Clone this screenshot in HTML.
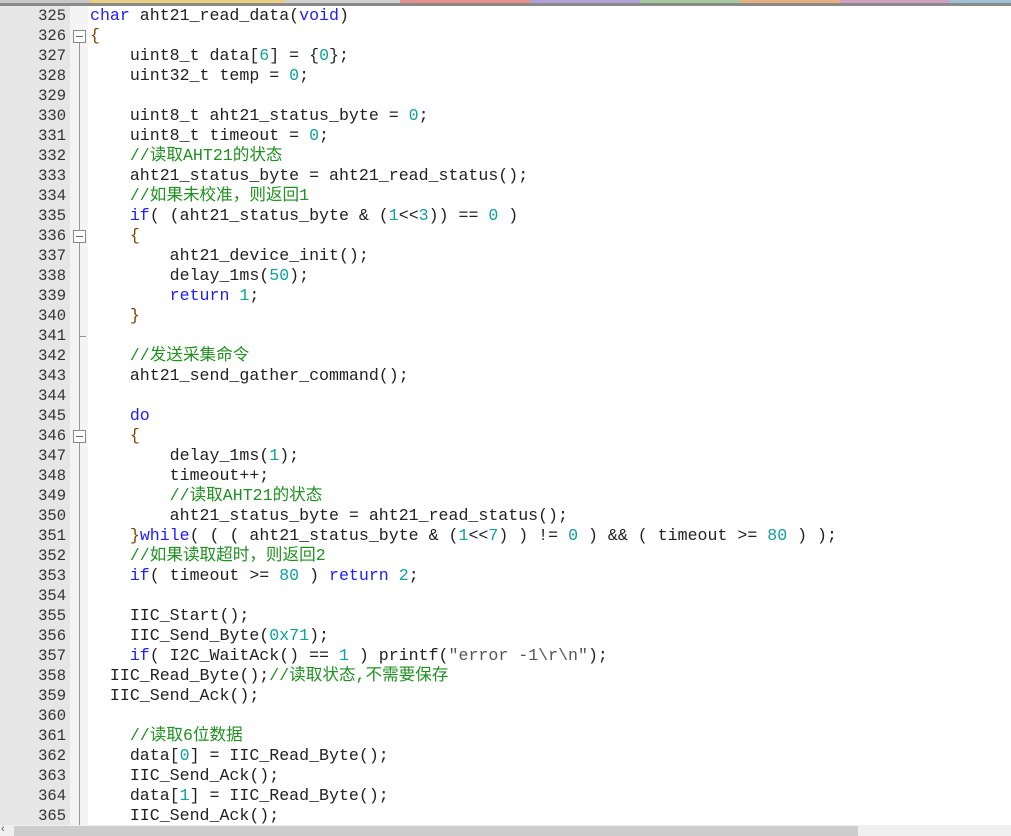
<!DOCTYPE html>
<html><head><meta charset="utf-8"><style>
body{margin:0;width:1011px;height:836px;overflow:hidden;background:#fff;position:relative;font-family:"Liberation Mono","Noto Sans CJK SC",monospace;}
.top{position:absolute;left:0;top:0;width:1011px;height:3px;background:linear-gradient(90deg,#c8c8c8 0 90px,#e8d080 90px 285px,#d0d0d0 285px 400px,#e89090 400px 530px,#b0a0d8 530px 640px,#a8c8a0 640px 740px,#e8b080 740px 840px,#d0a0c0 840px 950px,#a0c0d8 950px);}
.top2{position:absolute;left:0;top:3px;width:1011px;height:3px;background:#8a8a8a;}
.gut{position:absolute;left:0;top:6px;width:70px;height:819px;background:#e6e6e6;}
.fold{position:absolute;left:70px;top:6px;width:18px;height:819px;background:#f4f4f4;}
.vl{position:absolute;left:79px;top:42px;width:1px;height:783px;background:#999;}
.box{position:absolute;left:73px;width:11px;height:11px;border:1px solid #888;background:#fff;}
.box:after{content:"";position:absolute;left:2px;top:5px;width:7px;height:1px;background:#666;}
.tick{position:absolute;left:80px;width:6px;height:1px;background:#999;}
.ln{position:absolute;left:0;width:66px;text-align:right;font-size:15.5px;color:#333;height:20px;line-height:20px;}
.code{position:absolute;left:90px;font-size:16.6px;color:#222;white-space:pre;height:20px;line-height:20px;}
.k{color:#2020ff}.n{color:#10a0a0}.c{color:#209020}.s{color:#555}.b{color:#804000}
.sb{position:absolute;left:0;top:825px;width:1011px;height:11px;background:#f0f0f0;}
.th{position:absolute;left:14px;top:826px;width:844px;height:10px;background:#cdcdcd;}
</style></head><body>
<div class="top"></div><div class="top2"></div>
<div class="gut"></div><div class="fold"></div><div class="vl"></div>
<div class="box" style="top:30px"></div><div class="box" style="top:230px"></div><div class="box" style="top:430px"></div>
<div class="tick" style="top:336px"></div>
<div class="ln" style="top:6px">325</div><div class="ln" style="top:26px">326</div><div class="ln" style="top:46px">327</div><div class="ln" style="top:66px">328</div><div class="ln" style="top:86px">329</div><div class="ln" style="top:106px">330</div><div class="ln" style="top:126px">331</div><div class="ln" style="top:146px">332</div><div class="ln" style="top:166px">333</div><div class="ln" style="top:186px">334</div><div class="ln" style="top:206px">335</div><div class="ln" style="top:226px">336</div><div class="ln" style="top:246px">337</div><div class="ln" style="top:266px">338</div><div class="ln" style="top:286px">339</div><div class="ln" style="top:306px">340</div><div class="ln" style="top:326px">341</div><div class="ln" style="top:346px">342</div><div class="ln" style="top:366px">343</div><div class="ln" style="top:386px">344</div><div class="ln" style="top:406px">345</div><div class="ln" style="top:426px">346</div><div class="ln" style="top:446px">347</div><div class="ln" style="top:466px">348</div><div class="ln" style="top:486px">349</div><div class="ln" style="top:506px">350</div><div class="ln" style="top:526px">351</div><div class="ln" style="top:546px">352</div><div class="ln" style="top:566px">353</div><div class="ln" style="top:586px">354</div><div class="ln" style="top:606px">355</div><div class="ln" style="top:626px">356</div><div class="ln" style="top:646px">357</div><div class="ln" style="top:666px">358</div><div class="ln" style="top:686px">359</div><div class="ln" style="top:706px">360</div><div class="ln" style="top:726px">361</div><div class="ln" style="top:746px">362</div><div class="ln" style="top:766px">363</div><div class="ln" style="top:786px">364</div><div class="ln" style="top:806px">365</div>
<div class="code" style="top:6px"><span class="k">char</span> aht21_read_data(<span class="k">void</span>)</div>
<div class="code" style="top:26px"><span class="b">{</span></div>
<div class="code" style="top:46px">    uint8_t data[<span class="n">6</span>] = {<span class="n">0</span>};</div>
<div class="code" style="top:66px">    uint32_t temp = <span class="n">0</span>;</div>
<div class="code" style="top:106px">    uint8_t aht21_status_byte = <span class="n">0</span>;</div>
<div class="code" style="top:126px">    uint8_t timeout = <span class="n">0</span>;</div>
<div class="code" style="top:146px">    <span class="c">//读取AHT21的状态</span></div>
<div class="code" style="top:166px">    aht21_status_byte = aht21_read_status();</div>
<div class="code" style="top:186px">    <span class="c">//如果未校准，则返回1</span></div>
<div class="code" style="top:206px">    <span class="k">if</span>( (aht21_status_byte &amp; (<span class="n">1</span>&lt;&lt;<span class="n">3</span>)) == <span class="n">0</span> )</div>
<div class="code" style="top:226px">    <span class="b">{</span></div>
<div class="code" style="top:246px">        aht21_device_init();</div>
<div class="code" style="top:266px">        delay_1ms(<span class="n">50</span>);</div>
<div class="code" style="top:286px">        <span class="k">return</span> <span class="n">1</span>;</div>
<div class="code" style="top:306px">    <span class="b">}</span></div>
<div class="code" style="top:346px">    <span class="c">//发送采集命令</span></div>
<div class="code" style="top:366px">    aht21_send_gather_command();</div>
<div class="code" style="top:406px">    <span class="k">do</span></div>
<div class="code" style="top:426px">    <span class="b">{</span></div>
<div class="code" style="top:446px">        delay_1ms(<span class="n">1</span>);</div>
<div class="code" style="top:466px">        timeout++;</div>
<div class="code" style="top:486px">        <span class="c">//读取AHT21的状态</span></div>
<div class="code" style="top:506px">        aht21_status_byte = aht21_read_status();</div>
<div class="code" style="top:526px">    <span class="b">}</span><span class="k">while</span>( ( ( aht21_status_byte &amp; (<span class="n">1</span>&lt;&lt;<span class="n">7</span>) ) != <span class="n">0</span> ) &amp;&amp; ( timeout &gt;= <span class="n">80</span> ) );</div>
<div class="code" style="top:546px">    <span class="c">//如果读取超时，则返回2</span></div>
<div class="code" style="top:566px">    <span class="k">if</span>( timeout &gt;= <span class="n">80</span> ) <span class="k">return</span> <span class="n">2</span>;</div>
<div class="code" style="top:606px">    IIC_Start();</div>
<div class="code" style="top:626px">    IIC_Send_Byte(<span class="n">0x71</span>);</div>
<div class="code" style="top:646px">    <span class="k">if</span>( I2C_WaitAck() == <span class="n">1</span> ) printf(<span class="s">"error -1\r\n"</span>);</div>
<div class="code" style="top:666px">  IIC_Read_Byte();<span class="c">//读取状态,不需要保存</span></div>
<div class="code" style="top:686px">  IIC_Send_Ack();</div>
<div class="code" style="top:726px">    <span class="c">//读取6位数据</span></div>
<div class="code" style="top:746px">    data[<span class="n">0</span>] = IIC_Read_Byte();</div>
<div class="code" style="top:766px">    IIC_Send_Ack();</div>
<div class="code" style="top:786px">    data[<span class="n">1</span>] = IIC_Read_Byte();</div>
<div class="code" style="top:806px">    IIC_Send_Ack();</div>
<div class="sb"></div><div class="th"></div>
<div style="position:absolute;left:1px;top:823px;font-size:11px;color:#555;font-family:'Liberation Sans',sans-serif">‹</div>
</body></html>
